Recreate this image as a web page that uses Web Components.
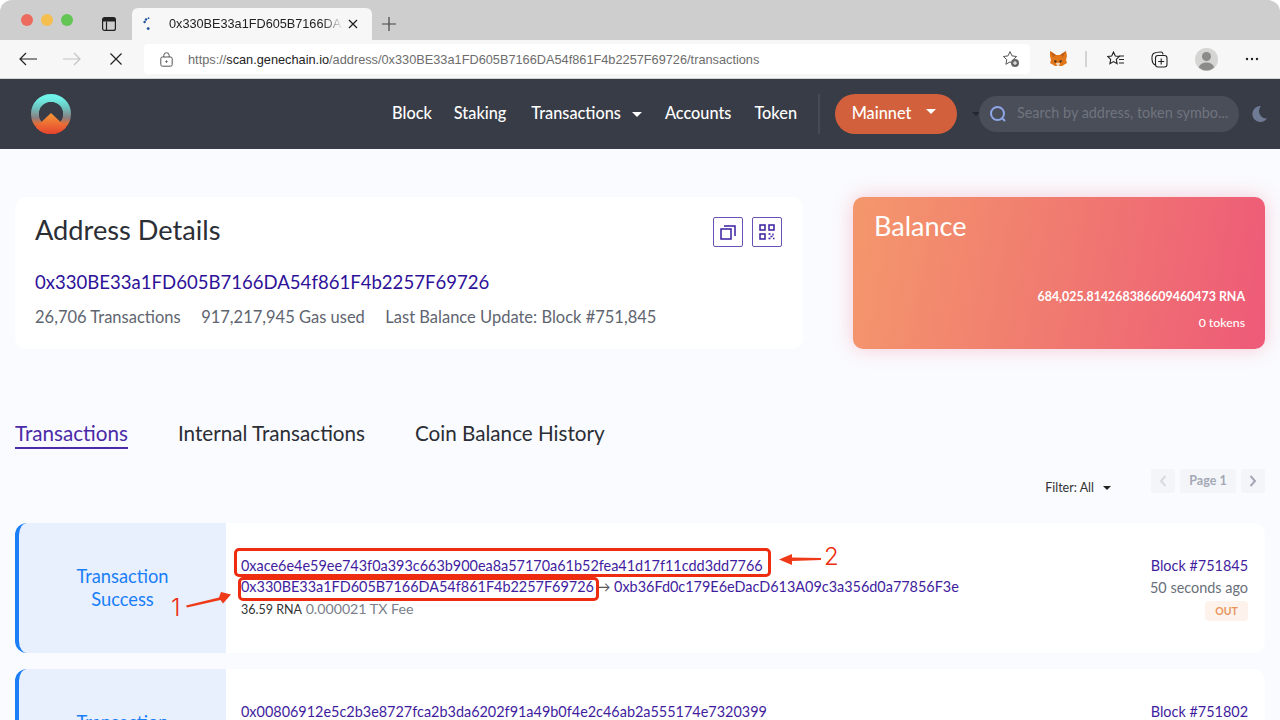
<!DOCTYPE html>
<html>
<head>
<meta charset="utf-8">
<title>Address Details</title>
<style>
    html, body {
        margin: 0;
        height: 720px;
        overflow: hidden;
        background: #fff;
        font-family: 'Lato', 'Liberation Sans', sans-serif;
    }
    #frame {
        position: relative;
        height: 720px;
        overflow: hidden;
        border-radius: 12px 12px 0 0;
        background: #fafbfe;
    }
</style>
</head>
<body>
<div id="frame">
    <browser-chrome></browser-chrome>
    <site-nav></site-nav>
    <page-main>
        <address-card slot="address"></address-card>
        <balance-card slot="balance"></balance-card>
        <tab-bar slot="tabs"></tab-bar>
        <tx-toolbar slot="toolbar"></tx-toolbar>
        <tx-tile slot="tiles" block="Block #751845" age="50 seconds ago" hash="0xace6e4e59ee743f0a393c663b900ea8a57170a61b52fea41d17f11cdd3dd7766" from="0x330BE33a1FD605B7166DA54f861F4b2257F69726" to="0xb36Fd0c179E6eDacD613A09c3a356d0a77856F3e" value="36.59 RNA" fee="0.000021 TX Fee"></tx-tile>
        <tx-tile slot="tiles" block="Block #751802" age="" hash="0x00806912e5c2b3e8727fca2b3da6202f91a49b0f4e2c46ab2a555174e7320399"></tx-tile>
    </page-main>
    <shot-notes></shot-notes>
</div>

<script>
class BrowserChrome extends HTMLElement {
    constructor() {
        super();
        this.attachShadow({ mode: 'open' });
    }

    connectedCallback() {
        this.shadowRoot.innerHTML = `
            <style>
                :host { display: block; font-family: 'Liberation Sans', sans-serif; }
                svg { display: block; flex: none; }
                .strip {
                    height: 40px;
                    background: #cecece;
                    display: flex;
                    align-items: flex-end;
                    padding-left: 21px;
                }
                .lights { display: flex; gap: 8px; height: 32px; align-items: flex-start; }
                .lights i { width: 12px; height: 12px; border-radius: 50%; display: block; margin-top: 6px; }
                .tabicon { margin: 0 0 8px 28px; }
                .tab {
                    width: 240px;
                    height: 32px;
                    margin-left: 15px;
                    background: #f7f7f7;
                    border-radius: 6px 6px 0 0;
                    display: flex;
                    align-items: center;
                    box-sizing: border-box;
                    padding: 0 11px;
                    font-size: 12.700px;
                    color: #222;
                }
                .title {
                    width: 174px;
                    margin-left: 18px;
                    white-space: nowrap;
                    overflow: hidden;
                    -webkit-mask-image: linear-gradient(90deg, #000 88%, transparent);
                    mask-image: linear-gradient(90deg, #000 88%, transparent);
                }
                .tab .x { margin-left: 4px; }
                .plus { margin: 0 0 8px 9px; }
                .bar {
                    height: 38px;
                    background: #f7f7f7;
                    border-bottom: 1px solid #d4d4d4;
                    display: flex;
                    align-items: center;
                    padding-left: 18px;
                }
                .url {
                    width: 886px;
                    height: 30px;
                    margin-left: 22px;
                    background: #fff;
                    border-radius: 4px;
                    display: flex;
                    align-items: center;
                    box-sizing: border-box;
                    padding: 0 10px 0 16px;
                    font-size: 12.760px;
                    color: #6d6d6d;
                    white-space: nowrap;
                }
                .url b { font-weight: 400; color: #222; }
                .url span { margin-left: 15px; flex: 1; }
            </style>
            <div class="strip">
                <div class="lights">
                    <i style="background:#ed6a5e"></i><i style="background:#f5bf4f"></i><i style="background:#62c554"></i>
                </div>
                <svg class="tabicon" width="16" height="16" viewBox="0 0 16 16" fill="none" stroke="#222" stroke-width="1.2"><rect x="1.6" y="1.6" width="12.8" height="12.8" rx="2"/><path d="M5.5 5.500v9"/><path d="M2 3.700h12" stroke-width="3.400"/></svg>
                <div class="tab">
                    <svg width="8" height="14" viewBox="0 0 8 14" fill="#1c4f9c"><circle cx="3" cy="2.5" r="1.2"/><circle cx="5.5" cy="1.2" r=".9"/><circle cx="1.6" cy="5" r="1.2"/><circle cx="5.2" cy="11.6" r="1.4"/></svg>
                    <div class="title">0x330BE33a1FD605B7166DA54f861F4b2257F69726</div>
                    <svg class="x" width="12" height="12" viewBox="0 0 12 12" stroke="#222" stroke-width="1.3"><path d="M2 2l8 8M10 2l-8 8"/></svg>
                </div>
                <svg class="plus" width="16" height="16" viewBox="0 0 16 16" stroke="#444" stroke-width="1.2"><path d="M8 1v14M1 8h14"/></svg>
            </div>
            <div class="bar">
                <svg width="20" height="16" viewBox="0 0 20 16" fill="none" stroke="#222" stroke-width="1.2"><path d="M19 8H2M8 2 2 8l6 6"/></svg>
                <svg style="margin-left:24px" width="20" height="16" viewBox="0 0 20 16" fill="none" stroke="#c4c4c4" stroke-width="1.2"><path d="M1 8h17M12 2l6 6-6 6"/></svg>
                <svg style="margin-left:28px" width="12" height="12" viewBox="0 0 12 12" stroke="#222" stroke-width="1.2"><path d="M.5.5l11 11M11.5.5l-11 11"/></svg>
                <div class="url">
                    <svg width="13" height="15" viewBox="0 0 13 15" fill="none" stroke="#555" stroke-width="1"><rect x=".8" y="5" width="11.4" height="9.2" rx="1.6"/><path d="M3.8 5V3.4a2.7 2.7 0 0 1 5.4 0V5"/><circle cx="6.5" cy="9.6" r=".7" fill="#555"/></svg>
                    <span>https://<b>scan.genechain.io</b>/address/0x330BE33a1FD605B7166DA54f861F4b2257F69726/transactions</span>
                    <svg width="18" height="18" viewBox="0 0 18 18" fill="none" stroke="#555" stroke-width="1"><path d="M8 1.6l2 4.3 4.6.6-3.4 3.2.9 4.6L8 11.900l-4.100 2.400.9-4.600L1.400 6.500 6 5.900z"/><circle cx="13" cy="13" r="4" fill="#666" stroke="none"/><path d="M13 11v4M11 13h4" stroke="#fff"/></svg>
                </div>
                <svg style="margin-left:19px" width="18" height="16" viewBox="0 0 18 16">
                    <path d="M1 0l6 4h4l6-4 1 5-1 4 1 3-5 3H6l-5-3 1-3-1-4z" fill="#e2761b"/>
                    <path d="M5 9l3 1-2 2zM13 9l-3 1 2 2z" fill="#3a2a20"/>
                    <path d="M7 12h4l-1 3H8z" fill="#e8d8c8"/>
                    <path d="M1 0l6 4-3 2zM17 0l-6 4 3 2z" fill="#c0601a"/>
                </svg>
                <i style="display:block;width:2px;height:16px;background:#d4d4d4;margin-left:18px"></i>
                <svg style="margin-left:20px" width="18" height="16" viewBox="0 0 18 16" fill="none" stroke="#222" stroke-width="1.1"><path d="M6.500 1l1.800 4 4 .5-3 2.900.8 4.300-3.600-2.100-3.600 2.100.8-4.300-3-2.900 4-.5z"/><path d="M12 5h5M12 8.500h5M12 12h5"/></svg>
                <svg style="margin-left:26px" width="17" height="17" viewBox="0 0 17 17" fill="none" stroke="#222" stroke-width="1.1"><rect x="4.500" y="4.500" width="11.500" height="11.500" rx="2.500"/><path d="M10.200 7.500v6M7.200 10.500h6M4 14C2 13 1.200 11 1 8.500.8 5.500 1 3.500 2.500 2.500 4 1.500 8 1 10 1c1 0 1.800.8 2 2.500"/></svg>
                <svg style="margin-left:27px" width="23" height="23" viewBox="0 0 23 23"><circle cx="11.500" cy="11.500" r="11.500" fill="#d5d5d3"/><circle cx="11.500" cy="8.500" r="4.500" fill="#8b8b89"/><path d="M3.800 19.500c1-3.500 4-5 7.700-5s6.700 1.500 7.700 5a11.500 11.500 0 0 1-15.400 0z" fill="#8b8b89"/></svg>
                <svg style="margin-left:27px" width="14" height="4" viewBox="0 0 14 4" fill="#222"><circle cx="2" cy="2" r="1.200"/><circle cx="7" cy="2" r="1.200"/><circle cx="12" cy="2" r="1.200"/></svg>
            </div>
        `;
    }
}

class SiteNav extends HTMLElement {
    constructor() {
        super();
        this.attachShadow({ mode: 'open' });
    }

    connectedCallback() {
        this.shadowRoot.innerHTML = `
            <style>
                :host {
                    display: flex;
                    align-items: center;
                    height: 70px;
                    background: #383c47;
                    box-sizing: border-box;
                    padding: 0 12px 0 31px;
                    color: #fff;
                    font-size: 16.300px;
                    font-weight: 500;
                }
                svg { display: block; flex: none; }
                .links { margin-left: auto; display: flex; align-items: center; }
                .links a { white-space: nowrap; padding-bottom: 3px; }
                .caret { width: 0; height: 0; border: 5px solid transparent; border-top-color: #fff; border-bottom: 0; margin-left: 11px; }
                .sep { width: 2px; height: 40px; background: #474b56; margin-left: 21px; }
                .net {
                    width: 122px;
                    height: 40px;
                    border-radius: 20px;
                    margin-left: 15px;
                    background: #d2603c;
                    display: flex;
                    align-items: center;
                    justify-content: center;
                    box-sizing: border-box;
                    padding: 0 4px 3px 0;
                }
                .net .caret { margin-left: 15px; margin-top: -3px; }
                .dark { width: 0; height: 0; border: 4px solid transparent; border-top-color: #23262e; border-bottom: 0; margin-left: 15px; }
                .search {
                    width: 260px;
                    height: 36px;
                    border-radius: 18px;
                    background: #4a4e59;
                    display: flex;
                    align-items: center;
                    box-sizing: border-box;
                    padding-left: 9px;
                    margin-left: -1px;
                    color: #70747f;
                    font-size: 14.400px;
                    font-weight: 400;
                    white-space: nowrap;
                }
                .search span { margin-left: 9px; padding-bottom: 3px; }
                .moon { margin-left: 11px; }
            </style>
            <svg width="40" height="40" viewBox="0 0 40 40">
                <defs>
                    <linearGradient id="ring" x1="0" y1="0" x2="0" y2="1">
                        <stop offset="0" stop-color="#6ff2e8"/><stop offset=".3" stop-color="#6cc4c0"/>
                        <stop offset=".62" stop-color="#8a7f80"/><stop offset=".8" stop-color="#e0703a"/><stop offset="1" stop-color="#e6432f"/>
                    </linearGradient>
                    <linearGradient id="peak" x1="0" y1="0" x2="0" y2="1">
                        <stop offset="0" stop-color="#f59a38"/><stop offset="1" stop-color="#e6432f"/>
                    </linearGradient>
                    <clipPath id="disc"><circle cx="20" cy="20" r="20"/></clipPath>
                </defs>
                <circle cx="20" cy="20" r="16" fill="none" stroke="url(#ring)" stroke-width="8"/>
                <circle cx="20" cy="20" r="12" fill="#383c47"/>
                <path d="M20 19 38 36 30 40H10L2 36z" fill="url(#peak)" clip-path="url(#disc)"/>
            </svg>
            <div class="links">
                <a>Block</a>
                <a style="margin-left:22px">Staking</a>
                <a style="margin-left:25px">Transactions</a><i class="caret"></i>
                <a style="margin-left:23px">Accounts</a>
                <a style="margin-left:23px">Token</a>
                <i class="sep"></i>
                <div class="net">Mainnet<i class="caret"></i></div>
                <i class="dark"></i>
                <div class="search">
                    <svg width="20" height="20" viewBox="0 0 20 20" fill="none" stroke="#8fa6e8" stroke-width="2"><circle cx="9.500" cy="9.500" r="6.500"/><path d="M14 14l3 3"/></svg>
                    <span>Search by address, token symbo...</span>
                </div>
                <svg class="moon" width="18" height="18" viewBox="0 0 18 18"><path d="M11 1a8 8 0 1 0 6 12.500A7.500 7.500 0 0 1 11 1z" fill="#6f7b95"/></svg>
            </div>
        `;
    }
}

class PageMain extends HTMLElement {
    constructor() {
        super();
        this.attachShadow({ mode: 'open' });
    }

    connectedCallback() {
        this.shadowRoot.innerHTML = `
            <style>
                :host { display: block; padding: 48px 15px 0; }
                .top { display: grid; grid-template-columns: 788px 412px; column-gap: 50px; height: 152px; }
                .tabs { margin-top: 70px; }
                .toolbar { margin-top: 18px; }
                .tiles { margin-top: 30px; display: flex; flex-direction: column; gap: 16px; }
            </style>
            <div class="top"><slot name="address"></slot><slot name="balance"></slot></div>
            <div class="tabs"><slot name="tabs"></slot></div>
            <div class="toolbar"><slot name="toolbar"></slot></div>
            <div class="tiles"><slot name="tiles"></slot></div>
        `;
    }
}

class AddressCard extends HTMLElement {
    constructor() {
        super();
        this.attachShadow({ mode: 'open' });
    }

    connectedCallback() {
        this.shadowRoot.innerHTML = `
            <style>
                :host {
                    display: block;
                    height: 152px;
                    background: #fff;
                    border-radius: 12px;
                    box-sizing: border-box;
                    padding: 20px 21px 0 20px;
                    color: #333;
                }
                .head { display: flex; align-items: flex-start; height: 30px; }
                h1 { margin: 0; font-size: 27.200px; font-weight: 400; color: #2b2e35; line-height: 26px; flex: 1; }
                .btn {
                    width: 30px;
                    height: 30px;
                    box-sizing: border-box;
                    border: 1px solid #6a52b5;
                    border-radius: 2px;
                    margin-left: 9px;
                    display: flex;
                    align-items: center;
                    justify-content: center;
                }
                .hash { margin-top: 23px; font-size: 18.570px; line-height: 24px; color: #2e1299; }
                .stats { margin-top: 12px; display: flex; font-size: 16.500px; line-height: 22px; color: #5f6570; white-space: nowrap; }
                .stats span + span { margin-left: 20.500px; }
            </style>
            <div class="head">
                <h1>Address Details</h1>
                <div class="btn"><svg width="16" height="16" viewBox="0 0 16 16" fill="none" stroke="#3a1fa0" stroke-width="1.500"><rect x="1" y="5" width="10" height="10"/><path d="M4 2h11v10"/></svg></div>
                <div class="btn"><svg width="16" height="16" viewBox="0 0 16 16" fill="none" stroke="#3a1fa0" stroke-width="1.500"><rect x="1" y="1" width="5" height="5"/><rect x="10" y="1" width="5" height="5"/><rect x="1" y="10" width="5" height="5"/><path d="M9.500 10h2M14 9.500v2M11.500 12.500h2M9.500 14.500h2M14 14.500h1.500" stroke-width="1.300"/></svg></div>
            </div>
            <div class="hash">0x330BE33a1FD605B7166DA54f861F4b2257F69726</div>
            <div class="stats"><span>26,706 Transactions</span><span>917,217,945 Gas used</span><span>Last Balance Update: Block #751,845</span></div>
        `;
    }
}

class BalanceCard extends HTMLElement {
    constructor() {
        super();
        this.attachShadow({ mode: 'open' });
    }

    connectedCallback() {
        this.shadowRoot.innerHTML = `
            <style>
                :host {
                    display: flex;
                    flex-direction: column;
                    height: 152px;
                    border-radius: 10px;
                    box-sizing: border-box;
                    padding: 12px 20px 0 21px;
                    color: #fff;
                    background: linear-gradient(100deg, #f4976c 0%, #f07a70 50%, #ee5a78 100%);
                    box-shadow: 0 0 20px rgba(238, 90, 120, .3);
                }
                h2 { margin: 0; font-size: 27px; line-height: 34px; font-weight: 400; }
                .sum { margin-top: 45px; text-align: right; font-size: 12.400px; line-height: 18px; font-weight: 700; white-space: nowrap; }
                .tok { margin-top: 8px; text-align: right; font-size: 12.300px; line-height: 18px; font-weight: 500; }
            </style>
            <h2>Balance</h2>
            <div class="sum">684,025.814268386609460473 RNA</div>
            <div class="tok">0 tokens</div>
        `;
    }
}

class TabBar extends HTMLElement {
    constructor() {
        super();
        this.attachShadow({ mode: 'open' });
    }

    connectedCallback() {
        this.shadowRoot.innerHTML = `
            <style>
                :host { display: flex; gap: 50px; font-size: 20.650px; line-height: 28px; color: #2b2e35; height: 32px; }
                span { display: block; height: 30px; box-sizing: border-box; white-space: nowrap; }
                .on { color: #4b2aa8; border-bottom: 2px solid #4b2aa8; }
            </style>
            <span class="on">Transactions</span>
            <span>Internal Transactions</span>
            <span>Coin Balance History</span>
        `;
    }
}

class TxToolbar extends HTMLElement {
    constructor() {
        super();
        this.attachShadow({ mode: 'open' });
    }

    connectedCallback() {
        this.shadowRoot.innerHTML = `
            <style>
                :host { display: flex; align-items: flex-start; justify-content: flex-end; height: 24px; }
                .filter { display: flex; align-items: center; font-size: 12.500px; color: #333; margin: 9px 40px 0 0; line-height: 20px; }
                .filter i { width: 0; height: 0; border: 4px solid transparent; border-top-color: #222; border-bottom: 0; margin-left: 9px; }
                .pg {
                    height: 24px;
                    background: #f3f5f9;
                    border-radius: 2px;
                    display: flex;
                    align-items: center;
                    justify-content: center;
                }
                .arrow { width: 24px; }
                .page { width: 56px; margin: 0 5px; color: #a3a8b5; font-size: 12.500px; font-weight: 700; padding-bottom: 2px; height: 22px; }
            </style>
            <div class="filter">Filter: All<i></i></div>
            <div class="pg arrow"><svg width="8" height="12" viewBox="0 0 8 12" fill="none" stroke="#d7dae1" stroke-width="2"><path d="M6.500 1 2 6l4.500 5"/></svg></div>
            <div class="pg page">Page 1</div>
            <div class="pg arrow"><svg width="8" height="12" viewBox="0 0 8 12" fill="none" stroke="#a3a8b5" stroke-width="2"><path d="M1.500 1 6 6l-4.500 5"/></svg></div>
        `;
    }
}

class TxTile extends HTMLElement {
    constructor() {
        super();
        this.attachShadow({ mode: 'open' });
    }

    connectedCallback() {
        const attr = (n) => this.getAttribute(n) || '';
        const parties = attr('from')
            ? `<div class="row"><a>${attr('from')}</a><span class="to">→</span> <a>${attr('to')}</a></div>
               <div class="meta"><span class="val">${attr('value')}</span> ${attr('fee')}</div>`
            : '';
        const extras = attr('age')
            ? `<div class="age">${attr('age')}</div><div class="badge">OUT</div>`
            : '';
        this.shadowRoot.innerHTML = `
            <style>
                :host {
                    display: grid;
                    grid-template-columns: 211px 1fr auto;
                    height: 130px;
                    background: #fff;
                    border-radius: 12px;
                    font-size: 14.430px;
                    line-height: 22px;
                    flex: none;
                }
                .status {
                    box-sizing: border-box;
                    background: #e8f0fe;
                    border-left: 4px solid #1a7ef7;
                    border-radius: 12px 0 0 12px;
                    color: #1a7ef7;
                    font-size: 18.300px;
                    line-height: 23px;
                    text-align: center;
                    padding: 42px 40px 0;
                }
                .main { padding: 32px 0 0 15px; color: #3f1d9e; white-space: nowrap; }
                .row { height: 22px; }
                .row:first-child { height: 21px; }
                .to { color: #555; margin-left: 2px; }
                .meta { color: #7a808a; font-size: 14.200px; line-height: 22px; }
                .val { color: #333; font-size: 12.500px; }
                .side { padding: 32px 17px 0 0; text-align: right; color: #3f1d9e; }
                .side > div:first-child { height: 22px; }
                .age { color: #6a707a; }
                .badge {
                    display: inline-block;
                    margin-top: 1px;
                    width: 43px;
                    height: 20px;
                    line-height: 20px;
                    text-align: center;
                    border-radius: 4px;
                    background: #fdf3ec;
                    color: #e8935c;
                    font-size: 10.500px;
                    font-weight: 700;
                }
            </style>
            <div class="status">Transaction Success</div>
            <div class="main">
                <div class="row"><a>${attr('hash')}</a></div>
                ${parties}
            </div>
            <div class="side">
                <div>${attr('block')}</div>
                ${extras}
            </div>
        `;
    }
}

// the red marks drawn over the screenshot
class ShotNotes extends HTMLElement {
    constructor() {
        super();
        this.attachShadow({ mode: 'open' });
    }

    connectedCallback() {
        this.shadowRoot.innerHTML = `
            <style>
                :host { position: absolute; inset: 0; pointer-events: none; font-family: 'Inter', 'Liberation Sans', sans-serif; }
                .box { position: absolute; box-sizing: border-box; border: 3px solid #ee2c10; border-radius: 5px; }
                .num { position: absolute; color: #ee2c10; font-size: 24px; line-height: 28px; font-weight: 300; }
                svg { position: absolute; left: 0; top: 0; }
            </style>
            <div class="box" style="left:234px;top:548px;width:537px;height:29px"></div>
            <div class="box" style="left:238px;top:577px;width:361px;height:24px"></div>
            <svg width="1280" height="720" fill="#ee3a18">
                <path d="M186 605.500 219 597.500 221 592 231 594.500 223 603.500 220.500 600 187 607.500z"/>
                <path d="M821 558 792 557.500 792 554 779 559.500 792 565 792 561 821 560z"/>
            </svg>
            <div class="num" style="left:171px;top:594px">1</div>
            <div class="num" style="left:824px;top:543px">2</div>
        `;
    }
}

customElements.define('browser-chrome', BrowserChrome);
customElements.define('site-nav', SiteNav);
customElements.define('page-main', PageMain);
customElements.define('address-card', AddressCard);
customElements.define('balance-card', BalanceCard);
customElements.define('tab-bar', TabBar);
customElements.define('tx-toolbar', TxToolbar);
customElements.define('tx-tile', TxTile);
customElements.define('shot-notes', ShotNotes);
</script>
</body>
</html>
